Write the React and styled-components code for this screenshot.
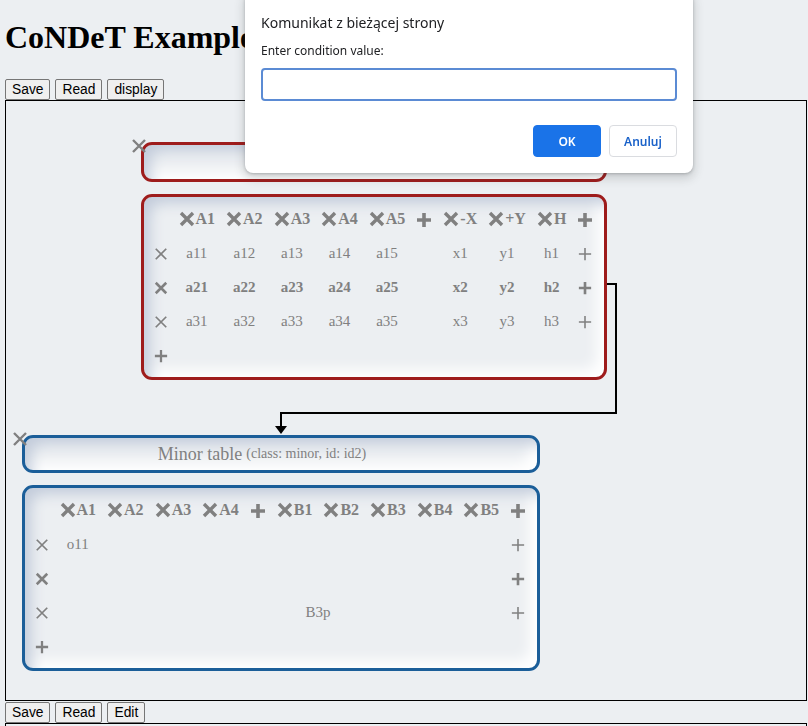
import React from 'react';
import styled, { createGlobalStyle } from 'styled-components';

const GlobalStyle = createGlobalStyle`
  html, body {
    margin: 0;
    padding: 0;
    overflow: hidden;
    background: #eceff2;
  }
  body {
    font-family: "Liberation Serif", serif;
  }
`;

const Page = styled.div`
  padding-left: 5px;
`;

const Title = styled.h1`
  margin: 19px 0 23px 0;
  font-size: 32px;
  line-height: 37px;
  font-weight: bold;
  color: #000;
`;

const Toolbar = styled.div`
  display: flex;
  gap: 5px;
  height: 21px;
  margin-top: ${(p) => p.$top || 0}px;
`;

const Button = styled.button`
  height: 21px;
  padding: 1px 6px;
  border: 1px solid #767676;
  border-radius: 2px;
  background: #efefef;
  color: #000;
  font-family: "Liberation Sans", Arial, sans-serif;
  font-size: 13.8px;
  line-height: 17px;
`;

const Canvas = styled.div`
  position: relative;
  width: 802px;
  height: ${(p) => p.$height}px;
  box-sizing: border-box;
  border: 1px solid #000;
  border-bottom-width: ${(p) => (p.$open ? 0 : 1)}px;
`;

const Connectors = styled.svg`
  position: absolute;
  left: 0;
  top: 0;
  width: 100%;
  height: 100%;
  pointer-events: none;
`;

const Node = styled.div`
  position: absolute;
  display: flex;
  flex-direction: column;
  gap: 12px;
`;

const DeleteNode = styled.span`
  position: absolute;
  left: -10px;
  top: -4px;
  display: flex;
`;

const boxColors = {
  major: '#9e1c1c',
  minor: '#1b5e99',
};

const Box = styled.div`
  box-sizing: border-box;
  border: 3px solid ${(p) => boxColors[p.$kind]};
  border-radius: 11px;
  background: #eceff2;
  box-shadow: inset 10px 10px 14px -4px #c3ccdb, inset -11px -11px 14px -4px #ffffff;
`;

const Header = styled(Box)`
  height: ${(p) => p.$height}px;
  display: flex;
  align-items: center;
  justify-content: center;
  padding-right: 38px;
  color: #808080;
  font-size: 18px;
  white-space: nowrap;

  small {
    font-size: 14px;
    margin-left: 4px;
  }
`;

const Body = styled(Box)`
  padding: 5px 4px;
`;

const Grid = styled.table`
  border-collapse: collapse;
  font-family: "Liberation Serif", serif;
  font-size: 15px;
  color: #808080;
`;

const Cell = styled.td`
  height: 34px;
  padding: 0 5.5px;
  text-align: center;
  vertical-align: middle;
  white-space: nowrap;
  font-weight: ${(p) => (p.$bold ? 'bold' : 'normal')};
`;

const HeadLabel = styled.span`
  display: inline-flex;
  align-items: center;
  vertical-align: middle;
  gap: 1px;
  font-size: 16px;
  font-weight: bold;
`;

const Glyph = styled.svg`
  display: inline-block;
  vertical-align: middle;
  flex: none;
  stroke: #808080;
  fill: none;
`;

const Cross = ({ size = 14, weight = 2 }) => (
  <Glyph width={size} height={size} viewBox="0 0 16 16">
    <path d="M2 2L14 14M14 2L2 14" strokeWidth={weight} />
  </Glyph>
);

const Plus = ({ size = 14, weight = 2 }) => (
  <Glyph width={size} height={size} viewBox="0 0 16 16">
    <path d="M8 1V15M1 8H15" strokeWidth={weight} />
  </Glyph>
);

const Dialog = styled.div`
  position: fixed;
  top: -8px;
  left: 245px;
  width: 448px;
  box-sizing: border-box;
  padding: 21px 16px 16px;
  background: #fff;
  border-radius: 8px;
  box-shadow: 0 1px 3px rgba(60, 64, 67, 0.3), 0 4px 10px 2px rgba(60, 64, 67, 0.18);
  font-family: "Noto Sans", "Open Sans", sans-serif;
  color: #202124;
`;

const DialogTitle = styled.div`
  font-size: 14px;
  line-height: 20px;
`;

const DialogLabel = styled.div`
  margin-top: 10px;
  font-size: 12px;
  line-height: 16px;
`;

const Field = styled.input`
  display: block;
  margin-top: 9px;
  width: 100%;
  height: 33px;
  box-sizing: border-box;
  border: 2px solid #5b8bd4;
  border-radius: 4px;
  outline: none;
  background: #fff;
`;

const DialogActions = styled.div`
  display: flex;
  justify-content: flex-end;
  gap: 8px;
  margin-top: 24px;
`;

const DialogButton = styled.button`
  width: 68px;
  height: 32px;
  border-radius: 4px;
  font-family: "Noto Sans", "Open Sans", sans-serif;
  font-size: 12px;
  font-weight: 600;
  border: 1px solid ${(p) => (p.$primary ? '#1a73e8' : '#dadce0')};
  background: ${(p) => (p.$primary ? '#1a73e8' : '#fff')};
  color: ${(p) => (p.$primary ? '#fff' : '#1a62c9')};
`;

const majorColumns = ['A1', 'A2', 'A3', 'A4', 'A5', null, '-X', '+Y', 'H'];
const majorRows = [
  { cells: ['a11', 'a12', 'a13', 'a14', 'a15', '', 'x1', 'y1', 'h1'] },
  { cells: ['a21', 'a22', 'a23', 'a24', 'a25', '', 'x2', 'y2', 'h2'], bold: true },
  { cells: ['a31', 'a32', 'a33', 'a34', 'a35', '', 'x3', 'y3', 'h3'] },
];

const minorColumns = ['A1', 'A2', 'A3', 'A4', null, 'B1', 'B2', 'B3', 'B4', 'B5'];
const minorRows = [
  { cells: ['o11', '', '', '', '', '', '', '', '', ''] },
  { cells: ['', '', '', '', '', '', '', '', '', ''], bold: true },
  { cells: ['', '', '', '', '', { text: 'B3p', span: 2 }, '', '', ''] },
];

const HeadRow = ({ columns }) => (
  <tr>
    <Cell />
    {columns.map((c, i) => (
      <Cell key={i}>
        {c === null ? (
          <Plus size={16} weight={3.6} />
        ) : (
          <HeadLabel>
            <Cross size={16} weight={3.4} />
            {c}
          </HeadLabel>
        )}
      </Cell>
    ))}
    <Cell>
      <Plus size={16} weight={3.6} />
    </Cell>
  </tr>
);

const DataTable = ({ columns, rows }) => (
  <Grid>
    <tbody>
      <HeadRow columns={columns} />
      {rows.map((r, i) => (
        <tr key={i}>
          <Cell>
            <Cross size={14} weight={r.bold ? 3 : 2} />
          </Cell>
          {r.cells.map((c, j) =>
            typeof c === 'object' ? (
              <Cell key={j} colSpan={c.span} $bold={r.bold}>
                {c.text}
              </Cell>
            ) : (
              <Cell key={j} $bold={r.bold}>
                {c}
              </Cell>
            )
          )}
          <Cell>
            <Plus size={14} weight={r.bold ? 3 : 1.8} />
          </Cell>
        </tr>
      ))}
      <tr>
        <Cell>
          <Plus size={14} weight={2.6} />
        </Cell>
      </tr>
    </tbody>
  </Grid>
);

const TableNode = ({ kind, x, y, width, headHeight, name, meta, columns, rows }) => (
  <Node style={{ left: x, top: y, width }}>
    <DeleteNode>
      <Cross size={16} weight={2.4} />
    </DeleteNode>
    <Header $kind={kind} $height={headHeight}>
      {name}
      <small>{meta}</small>
    </Header>
    <Body $kind={kind}>
      <DataTable columns={columns} rows={rows} />
    </Body>
  </Node>
);

export default function App() {
  return (
    <Page>
      <GlobalStyle />
      <Title>CoNDeT Example</Title>
      <Toolbar>
        <Button>Save</Button>
        <Button>Read</Button>
        <Button>display</Button>
      </Toolbar>
      <Canvas $height={601}>
        <Connectors>
          <path d="M601 183H610V312H275V326" stroke="#000" strokeWidth="2" fill="none" />
          <polygon points="269,325 281,325 275,333" fill="#000" />
        </Connectors>
        <TableNode
          kind="major"
          x={135}
          y={41}
          width={466}
          headHeight={40}
          name="Main table"
          meta="(class: main, id: id1)"
          columns={majorColumns}
          rows={majorRows}
        />
        <TableNode
          kind="minor"
          x={16}
          y={334}
          width={518}
          headHeight={38}
          name="Minor table"
          meta="(class: minor, id: id2)"
          columns={minorColumns}
          rows={minorRows}
        />
      </Canvas>
      <Toolbar $top={1}>
        <Button>Save</Button>
        <Button>Read</Button>
        <Button>Edit</Button>
      </Toolbar>
      <Canvas $height={40} $open />

      <Dialog>
        <DialogTitle>Komunikat z bieżącej strony</DialogTitle>
        <DialogLabel>Enter condition value:</DialogLabel>
        <Field />
        <DialogActions>
          <DialogButton $primary>OK</DialogButton>
          <DialogButton>Anuluj</DialogButton>
        </DialogActions>
      </Dialog>
    </Page>
  );
}
